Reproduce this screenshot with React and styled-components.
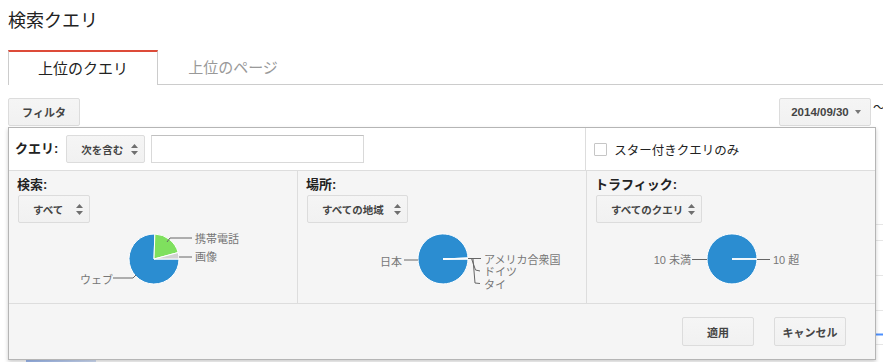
import React from "react";
import styled, { createGlobalStyle, css } from "styled-components";

const FONT = `"Liberation Sans", Arial, "Noto Sans CJK JP", sans-serif`;
const BLUE = "#2b8dd1";
const GREEN = "#7fe05e";
const GREY_SLICE = "#d2d2d2";

const GlobalStyle = createGlobalStyle`
  html, body {
    margin: 0;
    background: #fff;
    overflow: hidden;
  }
  body {
    font-family: ${FONT};
    color: #222;
  }
`;

/* angles in degrees, clockwise from 3 o'clock */
function slicePath(cx, cy, r, a0, a1) {
  const rad = (a) => (a * Math.PI) / 180;
  const x0 = cx + r * Math.cos(rad(a0));
  const y0 = cy + r * Math.sin(rad(a0));
  const x1 = cx + r * Math.cos(rad(a1));
  const y1 = cy + r * Math.sin(rad(a1));
  const large = a1 - a0 > 180 ? 1 : 0;
  return `M${cx},${cy} L${x0.toFixed(2)},${y0.toFixed(2)} A${r},${r} 0 ${large} 1 ${x1.toFixed(2)},${y1.toFixed(2)} Z`;
}

const PIES = {
  search: {
    slices: [
      { from: 0, to: 272, color: BLUE },
      { from: 272, to: 345, color: GREEN },
      { from: 345, to: 360, color: GREY_SLICE }
    ],
    leaders: [
      "158,17 161,13 183,13",
      "170,32 183,32",
      "104,53 124,53 127,50"
    ],
    labels: [
      { x: 186, y: 18, text: "携帯電話" },
      { x: 186, y: 36, text: "画像" },
      { x: 104, y: 58.5, text: "ウェブ", end: true }
    ]
  },
  place: {
    slices: [
      { from: 0, to: 357.5, color: BLUE },
      { from: 357.5, to: 359.2, color: GREEN },
      { from: 359.2, to: 360, color: GREY_SLICE }
    ],
    leaders: [
      "106,35 120,35",
      "170,33.5 183,33.5",
      "173.5,33.5 177.5,45 182,46",
      "175,34 177,58 182,58.5"
    ],
    labels: [
      { x: 104, y: 40.5, text: "日本", end: true },
      { x: 186, y: 38.5, text: "アメリカ合衆国" },
      { x: 186, y: 51, text: "ドイツ" },
      { x: 186, y: 63.5, text: "タイ" }
    ]
  },
  traffic: {
    slices: [
      { from: 0, to: 359.6, color: BLUE },
      { from: 359.6, to: 360, color: BLUE }
    ],
    leaders: ["105,34.5 120,34.5", "170,34.5 183,34.5"],
    labels: [
      { x: 104, y: 39, text: "10 未満", end: true },
      { x: 186, y: 39, text: "10 超" }
    ]
  }
};

function PieChart({ kind }) {
  const pie = PIES[kind];
  return (
    <ChartSvg viewBox="0 0 288 76">
      {pie.slices.map((s, i) => (
        <path
          key={i}
          d={slicePath(145, 34, 25, s.from, s.to)}
          fill={s.color}
          stroke="#fff"
          strokeWidth="1"
        />
      ))}
      {pie.leaders.map((pts, i) => (
        <polyline key={i} points={pts} fill="none" stroke="#666" strokeWidth="1" />
      ))}
      {pie.labels.map((l, i) => (
        <text
          key={i}
          x={l.x}
          y={l.y}
          textAnchor={l.end ? "end" : "start"}
          fontSize="11"
          fill="#777"
          fontFamily={FONT}
        >
          {l.text}
        </text>
      ))}
    </ChartSvg>
  );
}

function UpDown() {
  return (
    <svg width="7" height="11" viewBox="0 0 7 11">
      <path d="M0,4 L3.5,0 L7,4 Z M0,7 L3.5,11 L7,7 Z" fill="#6f6f6f" />
    </svg>
  );
}

function Select({ width, children }) {
  return (
    <SelectBox $width={width}>
      <span>{children}</span>
      <UpDown />
    </SelectBox>
  );
}

const SEGMENTS = [
  { key: "search", label: "検索:", value: "すべて", width: 72 },
  { key: "place", label: "場所:", value: "すべての地域", width: 101 },
  { key: "traffic", label: "トラフィック:", value: "すべてのクエリ", width: 106 }
];

export default function App() {
  return (
    <>
      <GlobalStyle />
      <Page>
        <Title>検索クエリ</Title>
        <TabBar>
          <Tab $active>上位のクエリ</Tab>
          <Tab>上位のページ</Tab>
        </TabBar>

        <Toolbar>
          <GreyButton $width={72}>フィルタ</GreyButton>
          <DateRange>
            <DateButton>
              2014/09/30
              <Caret />
            </DateButton>
            <Tilde>〜</Tilde>
          </DateRange>

          <FilterPanel>
            <QueryRow>
              <QueryCell>
                <FieldLabel $gap={8}>クエリ:</FieldLabel>
                <Select width={79}>次を含む</Select>
                <QueryInput />
              </QueryCell>
              <StarCell>
                <Checkbox />
                <span>スター付きクエリのみ</span>
              </StarCell>
            </QueryRow>

            <SegmentRow>
              {SEGMENTS.map((seg) => (
                <Segment key={seg.key}>
                  <FieldLabel>{seg.label}</FieldLabel>
                  <SegmentSelect>
                    <Select width={seg.width}>{seg.value}</Select>
                  </SegmentSelect>
                  <PieChart kind={seg.key} />
                </Segment>
              ))}
            </SegmentRow>

            <PanelFooter>
              <GreyButton $width={72} $tall>適用</GreyButton>
              <GreyButton $width={72} $tall>キャンセル</GreyButton>
            </PanelFooter>
          </FilterPanel>
        </Toolbar>

        <ChartBackdrop>
          <svg width="875" height="236" viewBox="0 0 875 236">
            <defs>
              <linearGradient id="area" x1="0" x2="1" y1="0" y2="0">
                <stop offset="0" stopColor="#9db9ef" />
                <stop offset="1" stopColor="#d3e0f8" />
              </linearGradient>
            </defs>
            {[97, 113, 148, 183, 217].map((y) => (
              <line key={y} x1="0" x2="875" y1={y + 0.5} y2={y + 0.5} stroke="#e6e6e6" />
            ))}
            <line x1="850" x2="875" y1="207.5" y2="207.5" stroke="#4d90fe" strokeWidth="2" />
            <rect x="18" y="233" width="70" height="3" fill="url(#area)" />
          </svg>
        </ChartBackdrop>
      </Page>
    </>
  );
}

const Page = styled.div`
  width: 867px;
  padding: 0 8px;
  font-family: ${FONT};
`;

const Title = styled.h1`
  margin: 0;
  padding-top: 9px;
  font-size: 18px;
  line-height: 24px;
  font-weight: normal;
  color: #222;
`;

const TabBar = styled.div`
  display: flex;
  margin-top: 17px;
  margin-right: -8px;
  border-bottom: 1px solid #ccc;
`;

const Tab = styled.div`
  box-sizing: border-box;
  width: 150px;
  height: 34px;
  display: flex;
  align-items: center;
  justify-content: center;
  padding-bottom: 3px;
  font-size: 15px;
  color: #999;
  border-top: 2px solid transparent;
  ${({ $active }) =>
    $active &&
    css`
      color: #222;
      background: #fff;
      border-top-color: #dd4b39;
      border-left: 1px solid #ccc;
      border-right: 1px solid #ccc;
      margin-bottom: -1px;
      height: 35px;
    `};
`;

const Toolbar = styled.div`
  position: relative;
  display: flex;
  align-items: flex-start;
  height: 29px;
  margin-top: 13px;
`;

const GreyButton = styled.div`
  box-sizing: border-box;
  width: ${({ $width }) => $width}px;
  height: ${({ $tall }) => ($tall ? 29 : 28)}px;
  display: flex;
  align-items: center;
  justify-content: center;
  font-size: 11px;
  font-weight: bold;
  color: #444;
  background: linear-gradient(#f5f5f5, #f1f1f1);
  border: 1px solid #dcdcdc;
  border-radius: 2px;
`;

const DateRange = styled.div`
  display: flex;
  align-items: flex-start;
  margin-left: auto;
  margin-right: -10px;
`;

const DateButton = styled(GreyButton)`
  width: 92px;
  font-size: 11.5px;
  gap: 6px;
  padding-left: 2px;
`;

const Caret = styled.span`
  width: 0;
  height: 0;
  border-left: 3.5px solid transparent;
  border-right: 3.5px solid transparent;
  border-top: 4px solid #777;
`;

const Tilde = styled.span`
  margin-left: 2px;
  font-size: 12px;
  line-height: 20px;
  color: #222;
`;

const FilterPanel = styled.div`
  position: absolute;
  top: 100%;
  left: 0;
  z-index: 2;
  width: 866px;
  border: 1px solid #b5b5b5;
  background: #f5f5f5;
  box-shadow: 0 2px 4px rgba(0, 0, 0, 0.2);
`;

const QueryRow = styled.div`
  display: grid;
  grid-template-columns: 2fr 1fr;
  height: 42px;
  background: #fff;
  border-bottom: 1px solid #ddd;
`;

const QueryCell = styled.div`
  display: flex;
  align-items: center;
  padding-left: 6px;
  border-right: 1px solid #ddd;
`;

const FieldLabel = styled.div`
  font-size: 13px;
  line-height: 16px;
  font-weight: bold;
  color: #222;
  margin-right: ${({ $gap }) => $gap || 0}px;
  white-space: nowrap;
`;

const SelectBox = styled.div`
  box-sizing: border-box;
  width: ${({ $width }) => $width}px;
  height: 28px;
  display: flex;
  align-items: center;
  justify-content: space-between;
  padding: 0 6px 0 14px;
  font-size: 10.5px;
  font-weight: bold;
  color: #444;
  background: linear-gradient(#f5f5f5, #f1f1f1);
  border: 1px solid #dcdcdc;
  border-radius: 2px;
  white-space: nowrap;
`;

const QueryInput = styled.div`
  box-sizing: border-box;
  width: 213px;
  height: 28px;
  margin-left: 6px;
  background: #fff;
  border: 1px solid #d9d9d9;
  border-top-color: #c0c0c0;
`;

const StarCell = styled.div`
  display: flex;
  align-items: center;
  gap: 7px;
  padding-left: 8px;
  font-size: 12.5px;
  color: #222;
`;

const Checkbox = styled.span`
  box-sizing: border-box;
  width: 13px;
  height: 13px;
  background: #fff;
  border: 1px solid #c6c6c6;
  border-radius: 1px;
`;

const SegmentRow = styled.div`
  display: grid;
  grid-template-columns: 1fr 1fr 1fr;
  height: 132px;
  border-bottom: 1px solid #ddd;
`;

const Segment = styled.div`
  padding: 6px 0 0 8px;
  border-right: 1px solid #ddd;
  &:last-child {
    border-right: none;
  }
`;

const SegmentSelect = styled.div`
  margin: 2px 0 0 1px;
`;

const ChartSvg = styled.svg`
  display: block;
  width: 288px;
  height: 76px;
  margin: 2px 0 0 -8px;
`;

const PanelFooter = styled.div`
  display: flex;
  justify-content: flex-end;
  gap: 20px;
  height: 55px;
  box-sizing: border-box;
  padding: 13px 29px 0 0;
`;

const ChartBackdrop = styled.div`
  margin-right: -8px;
  height: 236px;
  svg {
    display: block;
  }
`;
